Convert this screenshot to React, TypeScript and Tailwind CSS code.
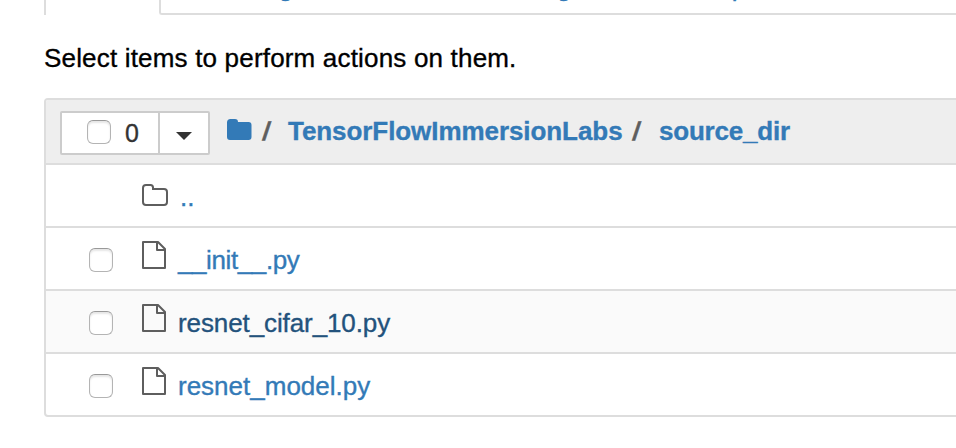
import type { ReactNode } from "react";

function Checkbox() {
  return (
    <span
      role="checkbox"
      aria-checked="false"
      className="block h-6 w-6 shrink-0 rounded-[6px] border border-[#b4b4b4] border-t-[#999] bg-white shadow-[inset_0_2px_2px_#e6e6e6]"
    />
  );
}

function FileIcon() {
  return (
    <svg viewBox="0 0 24 28" className="block h-7 w-6 shrink-0" fill="none" stroke="#5e5e5e" strokeWidth="2" strokeLinejoin="round">
      <path d="M1 1H16L23 8V27H1Z" />
      <path d="M15 1V9H23" />
    </svg>
  );
}

function FolderOutline() {
  return (
    <svg viewBox="0 0 26 22" className="block h-[22px] w-[26px] shrink-0" fill="none" stroke="#5e5e5e" strokeWidth="2">
      <path d="M1 4Q1 1 4 1H8.5Q11 1 11 3.5V5H22Q25 5 25 8V18Q25 21 22 21H4Q1 21 1 18Z" />
    </svg>
  );
}

function FileRow({ children, spacing, hovered }: { children: ReactNode; spacing: string; hovered?: boolean }) {
  return (
    <div className={`flex h-[63px] items-start border-t-2 border-[#ddd] pl-[43px] ${hovered ? "bg-[#fafafa] text-[#23527c]" : "text-[#337ab7]"}`}>
      <div className="mt-5"><Checkbox /></div>
      <div className="ml-[29px] mt-[13px]"><FileIcon /></div>
      <span className={`ml-3 mt-[17px] leading-[30px] ${spacing}`}>{children}</span>
    </div>
  );
}

export default function App() {
  return (
    <main className="h-[448px] w-[956px] overflow-hidden bg-white pl-11 font-['Liberation_Sans',Arial,sans-serif] text-[26px] whitespace-nowrap text-black [-webkit-text-stroke:0.35px]">
      <nav className="flex h-[15px] overflow-hidden leading-[30px] text-[#337ab7]">
        <div className="w-[115px] shrink-0 border-l-2 border-[#ddd]" />
        <div className="flex h-[15px] w-[860px] shrink-0 items-start rounded-bl-[3px] border-b-2 border-l-2 border-[#ddd] pl-[35px]">
          <span className="-mt-7 w-[147px]">Running</span>
          <span className="-mt-7 w-[182px]">Clusters</span>
          <span className="-mt-7">SageMaker Examples</span>
        </div>
      </nav>
      <p className="mt-[28px] h-[55px] leading-[30px] tracking-[0.18px]">Select items to perform actions on them.</p>
      <section className="h-[319px] w-[930px] overflow-hidden rounded-[4px] border-2 border-[#ddd]">
        <header className="flex h-[63px] items-start bg-[#eee] pl-[14px] text-[#5e5e5e]">
          <div className="mt-[11px] flex h-11 w-[150px] rounded-[2px] border-2 border-[#ccc] bg-white text-[#333]">
            <div className="flex h-10 w-[98px] items-start border-r-2 border-[#ccc] pl-[25px]">
              <div className="mt-[7px]"><Checkbox /></div>
              <span className="ml-[14px] mt-[5px] text-[25px] leading-[30px]">0</span>
            </div>
            <svg viewBox="0 0 16 8" className="ml-4 mt-[19px] h-2 w-4" fill="#333"><path d="M0 0H16L8 8Z" /></svg>
          </div>
          <svg viewBox="0 0 25 21" className="ml-[17px] mt-[19px] h-[21px] w-[25px]" fill="#337ab7">
            <path d="M0 3.5Q0 0 3.5 0H8Q11 0 11 3H21.5Q24.5 3 24.5 6V18Q24.5 21 21.5 21H3Q0 21 0 18Z" />
          </svg>
          <div className="mt-4 flex font-bold leading-[30px]">
            <span className="ml-[10px] w-[26px]"><span className="ml-px inline-block -skew-x-8">/</span></span>
            <span className="w-[345px] tracking-[-0.07px] text-[#337ab7]">TensorFlowImmersionLabs</span>
            <span className="w-[26px]"><span className="inline-block -skew-x-8">/</span></span>
            <span className="tracking-[-0.2px] text-[#337ab7]">source_dir</span>
          </div>
        </header>
        <div className="flex h-[63px] items-start border-t-2 border-[#ddd] pl-24">
          <div className="mt-[19px]"><FolderOutline /></div>
          <span className="ml-[12px] mt-[17px] leading-[30px] text-[#337ab7]">..</span>
        </div>
        <FileRow spacing="tracking-[-0.4px]">__init__.py</FileRow>
        <FileRow spacing="tracking-[-0.1px]" hovered>resnet_cifar_10.py</FileRow>
        <FileRow spacing="tracking-normal">resnet_model.py</FileRow>
      </section>
    </main>
  );
}
